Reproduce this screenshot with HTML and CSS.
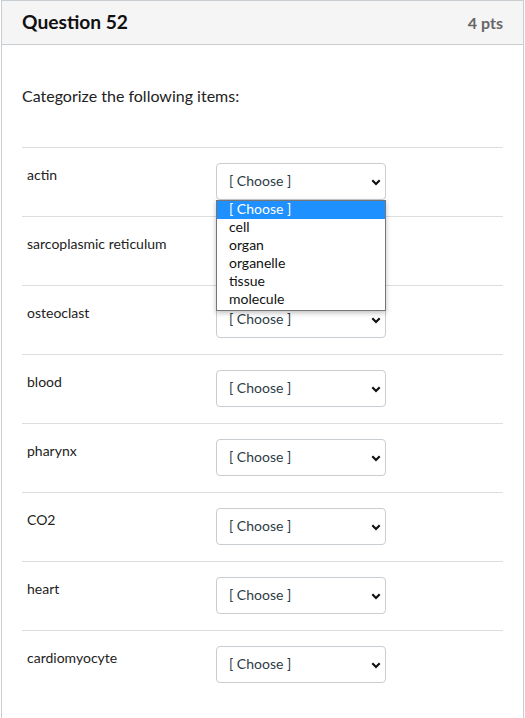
FILE: index.html
```html
<!DOCTYPE html>
<html>
<head>
<meta charset="utf-8">
<link rel="stylesheet" href="styles.css">
</head>
<body>
<div class="quiz">
  <div class="qheader">
    <div class="qtitle">Question 52</div>
    <div class="qpts">4 pts</div>
  </div>
  <div class="qbody">
    <p class="prompt">Categorize the following items:</p>
    <div class="rows">
      <div class="row">
        <div class="label">actin</div>
        <div class="selwrap">
          <div class="select"><span>[ Choose ]</span><svg class="chev" width="10" height="7" viewBox="0 0 10 7"><path d="M1.3 1.3 L5 5 L8.7 1.3" fill="none" stroke="#111" stroke-width="2.2"/></svg></div>
          <div class="popup">
            <div class="opt sel">[ Choose ]</div>
            <div class="opt">cell</div>
            <div class="opt">organ</div>
            <div class="opt">organelle</div>
            <div class="opt">tissue</div>
            <div class="opt">molecule</div>
          </div>
        </div>
      </div>
      <div class="row">
        <div class="label">sarcoplasmic reticulum</div>
        <div class="selwrap"><div class="select covered"><span>[ Choose ]</span><svg class="chev" width="10" height="7" viewBox="0 0 10 7"><path d="M1.3 1.3 L5 5 L8.7 1.3" fill="none" stroke="#111" stroke-width="2.2"/></svg></div></div>
      </div>
      <div class="row">
        <div class="label">osteoclast</div>
        <div class="selwrap"><div class="select"><span>[ Choose ]</span><svg class="chev" width="10" height="7" viewBox="0 0 10 7"><path d="M1.3 1.3 L5 5 L8.7 1.3" fill="none" stroke="#111" stroke-width="2.2"/></svg></div></div>
      </div>
      <div class="row">
        <div class="label">blood</div>
        <div class="selwrap"><div class="select"><span>[ Choose ]</span><svg class="chev" width="10" height="7" viewBox="0 0 10 7"><path d="M1.3 1.3 L5 5 L8.7 1.3" fill="none" stroke="#111" stroke-width="2.2"/></svg></div></div>
      </div>
      <div class="row">
        <div class="label">pharynx</div>
        <div class="selwrap"><div class="select"><span>[ Choose ]</span><svg class="chev" width="10" height="7" viewBox="0 0 10 7"><path d="M1.3 1.3 L5 5 L8.7 1.3" fill="none" stroke="#111" stroke-width="2.2"/></svg></div></div>
      </div>
      <div class="row">
        <div class="label">CO2</div>
        <div class="selwrap"><div class="select"><span>[ Choose ]</span><svg class="chev" width="10" height="7" viewBox="0 0 10 7"><path d="M1.3 1.3 L5 5 L8.7 1.3" fill="none" stroke="#111" stroke-width="2.2"/></svg></div></div>
      </div>
      <div class="row">
        <div class="label">heart</div>
        <div class="selwrap"><div class="select"><span>[ Choose ]</span><svg class="chev" width="10" height="7" viewBox="0 0 10 7"><path d="M1.3 1.3 L5 5 L8.7 1.3" fill="none" stroke="#111" stroke-width="2.2"/></svg></div></div>
      </div>
      <div class="row">
        <div class="label">cardiomyocyte</div>
        <div class="selwrap"><div class="select"><span>[ Choose ]</span><svg class="chev" width="10" height="7" viewBox="0 0 10 7"><path d="M1.3 1.3 L5 5 L8.7 1.3" fill="none" stroke="#111" stroke-width="2.2"/></svg></div></div>
      </div>
    </div>
  </div>
</div>
</body>
</html>
```

FILE: styles.css
```css
html, body {
  margin: 0;
  padding: 0;
  background: #fff;
}
body {
  font-family: Lato, "Liberation Sans", sans-serif;
  color: #2d3b45;
  overflow: hidden;
}
.quiz {
  margin-left: 1px;
  width: 521px;
  border: 1px solid #c7cdd1;
  border-bottom: none;
  min-height: 740px;
}
.qheader {
  height: 44px;
  box-sizing: border-box;
  background: #f5f5f5;
  border-bottom: 1px solid #c7cdd1;
  display: flex;
  justify-content: space-between;
  align-items: center;
  padding: 0 20px;
}
.qtitle {
  font-size: 19.2px;
  font-weight: 700;
  color: #111;
  margin-top: -2px;
}
.qpts {
  font-size: 16px;
  font-weight: 700;
  color: #666;
}
.qbody {
  padding: 0 20px;
}
.prompt {
  margin: 0;
  padding-top: 41px;
  height: 61px;
  font-size: 16px;
  line-height: 20px;
  color: #222;
}
.row {
  border-top: 1px solid #ddd;
  height: 68px;
  display: grid;
  grid-template-columns: 189px 170px;
  padding: 0 5px;
}
.label {
  font-size: 14px;
  line-height: 20px;
  padding-top: 17px;
  color: #222;
}
.selwrap {
  position: relative;
  padding-top: 15px;
}
.select {
  height: 37px;
  box-sizing: border-box;
  border: 1px solid #c7cdd1;
  border-radius: 4px;
  display: flex;
  align-items: center;
  justify-content: space-between;
  padding: 0 4px 2px 12px;
  font-size: 14px;
  color: #2d3b45;
  background: #fff;
}
.covered span {
  visibility: hidden;
}
.chev {
  display: block;
  margin-top: 3px;
}
.popup {
  position: absolute;
  left: 0;
  top: 52px;
  width: 170px;
  box-sizing: border-box;
  border: 1px solid #767676;
  background: #fff;
  box-shadow: 0 2px 5px rgba(0,0,0,0.25);
  padding-bottom: 1px;
  z-index: 5;
}
.opt {
  height: 18px;
  line-height: 16px;
  font-size: 14px;
  padding-left: 12px;
  color: #111;
}
.opt.sel {
  background: #1e90ff;
  color: #fff;
}
```
